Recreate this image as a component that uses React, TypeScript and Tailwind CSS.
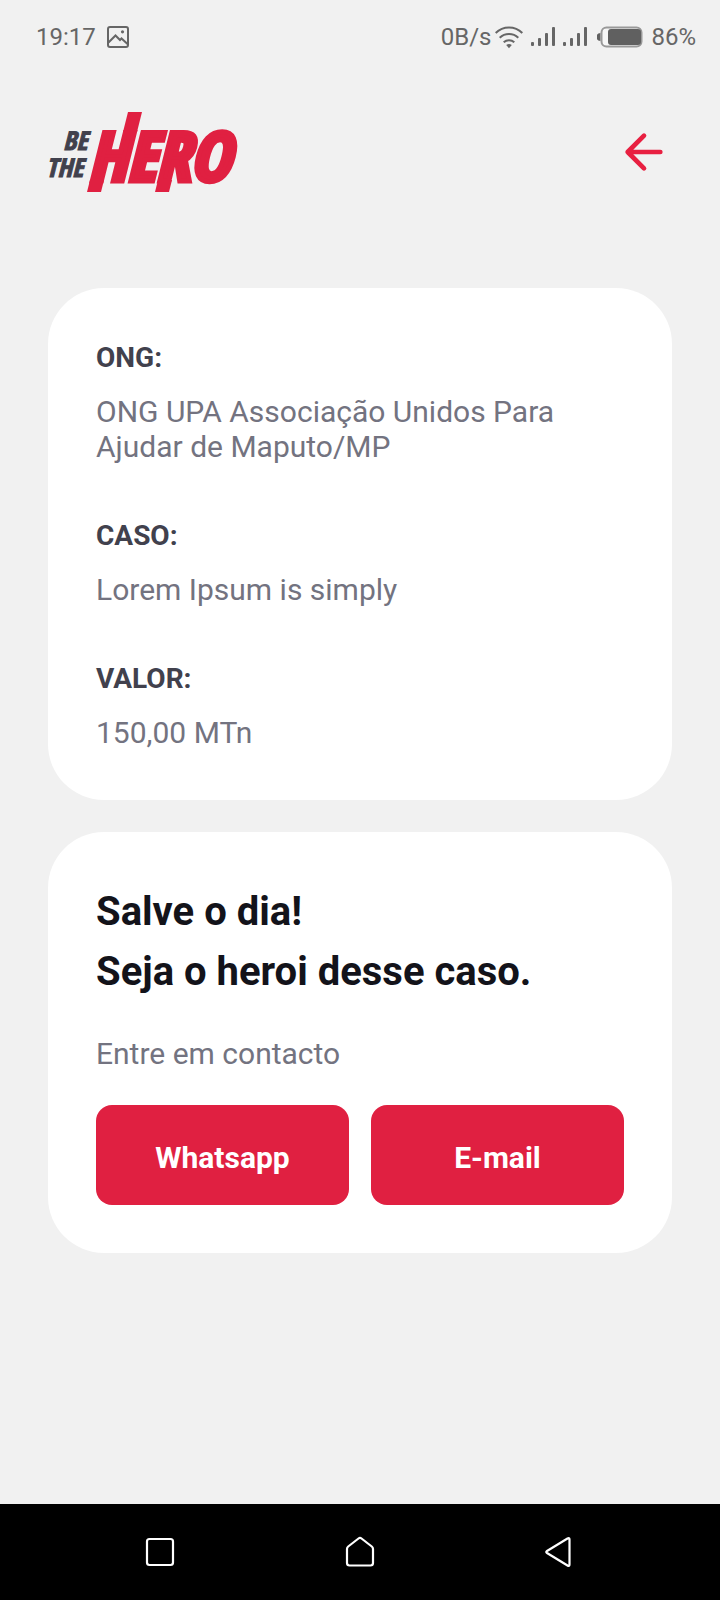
import type { ReactNode } from "react";

function Logo() {
  return (
    <svg
      viewBox="0 0 190 80"
      className="h-20 w-[190px] overflow-visible"
      role="img"
      aria-label="Be The Hero"
    >
      <g
        fontFamily='"Open Sans Condensed", "Roboto Condensed", sans-serif'
        fontWeight="700"
        fontStyle="italic"
      >
        <g fill="#41414d" stroke="#41414d" strokeWidth="1" fontSize="26">
          <text x="15" y="38">BE</text>
          <text x="-2" y="65">THE</text>
        </g>
        <text x="40" y="69" fontSize="68" fill="#e02041" stroke="#e02041" strokeWidth="5">
          HERO
        </text>
      </g>
      <g fill="#e02041">
        <path d="M80 0h14l-5 20h-14z" />
        <path d="M42 68h14l-3 12h-14z" />
        <path d="M110 68h14l-3 12h-14z" />
      </g>
    </svg>
  );
}

function StatusBar() {
  return (
    <div className="flex h-[73px] items-center justify-between pr-6 pl-9 text-2xl text-[#666666]">
      <div className="flex items-center gap-[11px]">
        <span>19:17</span>
        <svg viewBox="0 0 22 22" className="size-[22px]" fill="none" stroke="currentColor" strokeWidth="2" aria-hidden="true">
          <rect x="1" y="1" width="20" height="20" rx="2" />
          <path d="M1.500 16.500l7-7 4.500 4.500 1.500-1.500 6 5.500" />
          <circle cx="15.500" cy="5.800" r="1.600" fill="currentColor" stroke="none" />
        </svg>
      </div>
      <div className="flex items-center">
        <span>0B/s</span>
        <svg viewBox="0 0 28 24" className="ml-1 h-6 w-7" fill="none" stroke="currentColor" strokeWidth="2" aria-hidden="true">
          <path d="M.700 8a19 19 0 0 1 26.600 0M4.700 12.800a13.500 13.500 0 0 1 18.600 0M8.700 17.300a8 8 0 0 1 10.600 0" />
          <path d="M11.200 20a4.500 4.500 0 0 1 5.600 0l-2.800 3.200z" fill="currentColor" stroke="none" />
        </svg>
        <SignalBars />
        <SignalBars />
        <svg viewBox="0 0 46 22" className="ml-[10px] h-[22px] w-[46px]" aria-hidden="true">
          <path d="M3.500 7v8a4 4 0 0 1 0-8z" fill="#606060" />
          <rect x="4.500" y="1.500" width="40" height="19" rx="5" fill="#f7f7f7" stroke="#999999" strokeWidth="2" />
          <rect x="11" y="3" width="33" height="16" rx="3" fill="#606060" />
        </svg>
        <span className="ml-2">86%</span>
      </div>
    </div>
  );
}

function SignalBars() {
  return (
    <svg viewBox="0 0 24 20" className="ml-2 h-5 w-6" fill="currentColor" aria-hidden="true">
      <rect x="0" y="15" width="3" height="4" rx="1" />
      <rect x="7" y="11" width="3" height="8" rx="1" />
      <rect x="14" y="6" width="3" height="13" rx="1" />
      <rect x="21" y="0" width="3" height="19" rx="1" />
    </svg>
  );
}

function Detail({ label, children }: { label: string; children: ReactNode }) {
  return (
    <div>
      <dt className="text-[28px] leading-10 font-bold text-[#41414d]">{label}</dt>
      <dd className="mt-4 text-[30px] leading-[35px] text-[#737380]">{children}</dd>
    </div>
  );
}

function ContactButton({ children }: { children: ReactNode }) {
  return (
    <button
      type="button"
      className="h-[100px] flex-1 rounded-2xl bg-[#e02041] pt-1 text-[30px] font-bold text-white"
    >
      {children}
    </button>
  );
}

function NavigationBar() {
  return (
    <nav className="flex h-24 items-center justify-center gap-[152px] bg-black text-white" aria-label="Sistema">
      <button type="button" aria-label="Recentes">
        <svg viewBox="0 0 48 48" className="size-12" fill="none" stroke="currentColor" strokeWidth="2.200">
          <rect x="11" y="11" width="26" height="26" rx="2.500" />
        </svg>
      </button>
      <button type="button" aria-label="Início">
        <svg viewBox="0 0 48 48" className="size-12" fill="none" stroke="currentColor" strokeWidth="2.200" strokeLinejoin="round">
          <path d="M11 21q0-1.500 1.200-2.500l10.300-8q1.500-1.200 3 0l10.300 8q1.200 1 1.200 2.500v14q0 2.500-2.500 2.500h-21q-2.500 0-2.500-2.500z" />
        </svg>
      </button>
      <button type="button" aria-label="Voltar">
        <svg viewBox="0 0 48 48" className="size-12" fill="none" stroke="currentColor" strokeWidth="2.200" strokeLinejoin="round">
          <path d="M11 23q-1.500 1 0 2l20.500 12.500q2 1.200 2-1v-25q0-2.200-2-1z" />
        </svg>
      </button>
    </nav>
  );
}

export default function App() {
  return (
    <div className="flex min-h-screen flex-col bg-[#f1f1f1] font-['Roboto',sans-serif]">
      <StatusBar />
      <div className="flex flex-1 flex-col px-12 pt-[39px] pb-12">
        <header className="flex items-center justify-between">
          <Logo />
          <button type="button" aria-label="Voltar aos casos">
            <svg
              viewBox="0 0 24 24"
              className="size-14"
              fill="none"
              stroke="#e82041"
              strokeWidth="2"
              strokeLinecap="round"
              strokeLinejoin="round"
            >
              <path d="M19 12H5M12 19l-7-7 7-7" />
            </svg>
          </button>
        </header>

        <main className="mt-24 flex flex-col gap-8">
          <dl className="flex flex-col gap-[52px] rounded-[56px] bg-white px-12 py-[50px]">
            <Detail label="ONG:">ONG UPA Associação Unidos Para Ajudar de Maputo/MP</Detail>
            <Detail label="CASO:">Lorem Ipsum is simply</Detail>
            <Detail label="VALOR:">150,00 MTn</Detail>
          </dl>

          <section className="rounded-[56px] bg-white px-12 pt-[50px] pb-12">
            <h1 className="text-[40px] leading-[60px] font-bold text-[#13131a]">
              Salve o dia!
              <br />
              Seja o heroi desse caso.
            </h1>
            <p className="mt-[31px] text-[30px] leading-[41px] text-[#737380]">Entre em contacto</p>
            <div className="mt-[31px] flex gap-[22px]">
              <ContactButton>Whatsapp</ContactButton>
              <ContactButton>E-mail</ContactButton>
            </div>
          </section>
        </main>
      </div>
      <NavigationBar />
    </div>
  );
}
